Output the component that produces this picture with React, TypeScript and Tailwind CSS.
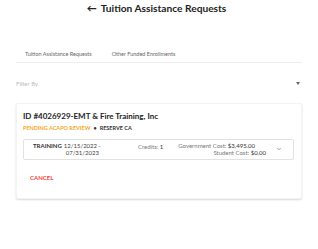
import { ChevronDown } from "lucide-react";

export default function App() {
  return (
    <div className="w-[318px] h-[249px] bg-white font-['Lato','Liberation_Sans',sans-serif] text-[#222]">
      {/* page title */}
      <div className="h-[15px] flex items-center justify-center gap-[4px] pt-[1px] pr-[5px]">
        <span className="text-[10px] leading-none font-bold">←</span>
        <h1 className="text-[10.2px] leading-none font-bold">Tuition Assistance Requests</h1>
      </div>

      {/* tabs */}
      <div className="mx-[16px] mt-[31px] border-b border-[#eeeeee] h-[17px] flex items-center pl-[9px] gap-[20px] text-[5.5px] text-[#666]">
        <span>Tuition Assistance Requests</span>
        <span>Other Funded Enrollments</span>
      </div>

      {/* filter */}
      <div className="mx-[16px] mt-[15px] flex items-center justify-between h-[11px]">
        <span className="text-[6px] text-[#bbbbbb]">Filter By</span>
        <span className="mr-[2px] w-0 h-0 border-l-[2.5px] border-r-[2.5px] border-t-[3px] border-l-transparent border-r-transparent border-t-[#666]" />
      </div>

      {/* request card */}
      <div className="mx-[16px] mt-[14px] rounded-[2px] bg-white shadow-[0_1px_2px_rgba(0,0,0,0.15)] border border-[#f3f3f3] px-[6px] pt-[8px] pb-[12px]">
        <div className="text-[8px] font-bold leading-none">ID #4026929-EMT &amp; Fire Training, Inc</div>
        <div className="mt-[6px] flex items-center gap-[3px] text-[5.5px] font-bold leading-none">
          <span className="text-[#f5a623]">PENDING ACAPO REVIEW</span>
          <span className="text-[#333]">•</span>
          <span className="text-[#333]">RESERVE CA</span>
        </div>

        <div className="mt-[7px] mr-[1px] border border-[#e2e2e2] rounded-[2px] h-[21px] flex items-center text-[6px] leading-[7px] text-[#444] whitespace-nowrap">
          <div className="w-[114px] shrink-0 pl-[9px] flex">
            <span className="font-bold text-[#333] mr-[2px]">TRAINING</span>
            <span className="text-center">12/15/2022 -<br />07/31/2023</span>
          </div>
          <div className="w-[39px] shrink-0 self-start pt-[3px] text-[#777]">
            Credits: <span className="text-[#333]">1</span>
          </div>
          <div className="w-[89px] shrink-0 flex flex-col items-end text-[#777]">
            <span className="pr-[11px]">Government Cost: <span className="text-[#333]">$3,495.00</span></span>
            <span>Student Cost: <span className="text-[#333]">$0.00</span></span>
          </div>
          <ChevronDown className="ml-auto mr-[11px] w-[6px] h-[6px] text-[#666]" strokeWidth={2.5} />
        </div>

        <button className="mt-[15px] ml-[7px] text-[6px] font-bold text-[#f44336] leading-none">CANCEL</button>
      </div>
    </div>
  );
}
